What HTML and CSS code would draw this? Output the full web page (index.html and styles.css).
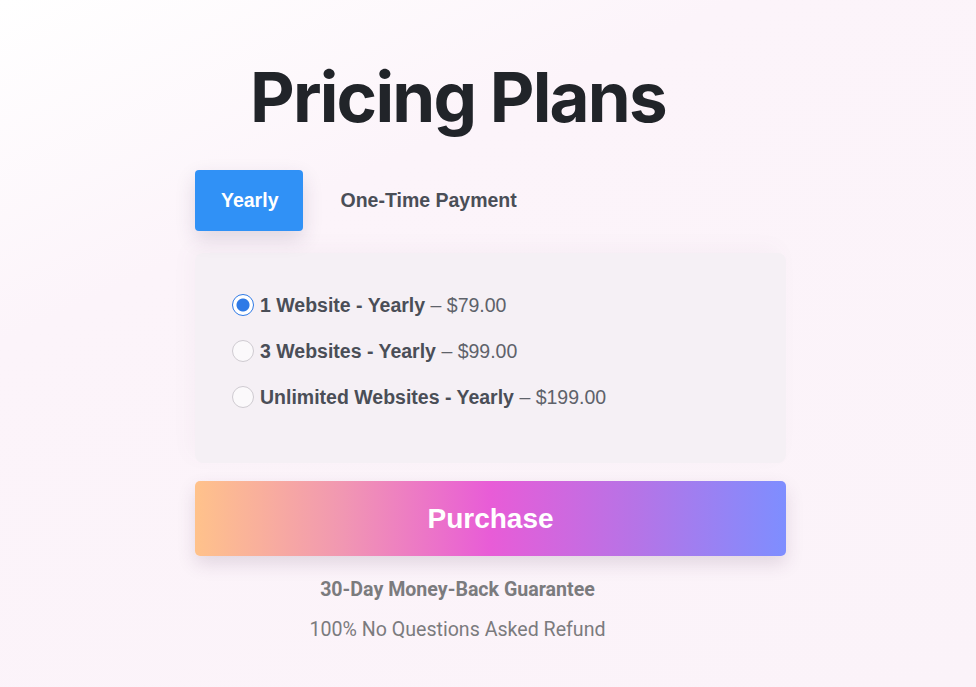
FILE: index.html
```html
<!DOCTYPE html>
<html lang="en">
<head>
    <meta charset="UTF-8">
    <meta name="viewport" content="width=device-width, initial-scale=1.0">
    <title>Pricing Plans</title>
    <link rel="stylesheet" href="styles.css">
</head>
<body>

    <div class="pricing">
        <h1 class="title">Pricing Plans</h1>

        <div class="tabs">
            <button class="tab active">Yearly</button>
            <button class="tab">One-Time Payment</button>
        </div>

        <div class="plans">
            <label class="plan">
                <input type="radio" name="plan" checked>
                <span><b>1 Website - Yearly</b> – $79.00</span>
            </label>
            <label class="plan">
                <input type="radio" name="plan">
                <span><b>3 Websites - Yearly</b> – $99.00</span>
            </label>
            <label class="plan">
                <input type="radio" name="plan">
                <span><b>Unlimited Websites - Yearly</b> – $199.00</span>
            </label>
        </div>

        <button class="btn-purchase">Purchase</button>

        <div class="guarantee">
            <p class="guarantee-title">30-Day Money-Back Guarantee</p>
            <p class="guarantee-text">100% No Questions Asked Refund</p>
        </div>
    </div>

</body>
</html>
```

FILE: styles.css
```css
html, body {
    height: 100%;
}

body {
    margin: 0;
    font-family: "Liberation Sans", Arial, sans-serif;
    background: linear-gradient(155deg, #ffffff 0%, #fcf4fa 30%, #fbf3f9 100%);
    color: #4a4e57;
}

.pricing {
    width: 591px;
    margin-left: 195px;
    padding-top: 52px;
}

.title {
    margin: 0 0 28px 55px;
    font-family: Inter, sans-serif;
    font-weight: 700;
    font-size: 69px;
    line-height: 90px;
    letter-spacing: -1.8px;
    color: #212429;
}

.tabs {
    display: flex;
    align-items: center;
    margin-bottom: 22px;
}

.tab {
    font-family: "Liberation Sans", Arial, sans-serif;
    font-weight: bold;
    font-size: 19.5px;
    height: 61px;
    padding: 0 38px 0 37px;
    border: none;
    border-radius: 4px;
    background: transparent;
    color: #4a4e57;
    cursor: pointer;
}

.tab.active {
    padding: 0 25px 0 26px;
    background: #3091f6;
    color: #fff;
    box-shadow: 0 8px 20px rgba(60, 40, 80, 0.15);
}

.plans {
    display: flex;
    flex-direction: column;
    gap: 24px;
    padding: 41px 37px 55px;
    background: #f5f0f5;
    border-radius: 8px;
    box-shadow: -6px -6px 20px rgba(120, 90, 120, 0.04);
}

.plan {
    display: flex;
    align-items: center;
    gap: 6px;
    font-size: 19.5px;
    line-height: 22px;
}

.plan span {
    color: #5e626a;
}

.plan b {
    font-weight: bold;
    color: #4a4e57;
}

.plan input {
    appearance: none;
    width: 22px;
    height: 22px;
    margin: 0;
    border: 1px solid #cfcbd1;
    border-radius: 50%;
    background: #fbf9fb;
    flex-shrink: 0;
}

.plan input:checked {
    border: 1px solid #2f7ae6;
    background: radial-gradient(circle, #2f7ae6 0 6px, #fff 7px);
}

.btn-purchase {
    display: block;
    width: 100%;
    height: 75px;
    margin-top: 18px;
    border: none;
    border-radius: 5px;
    background: linear-gradient(90deg, #ffc28b 0%, #f197b2 25%, #e85cd7 50%, #b574e7 75%, #7e8eff 100%);
    color: #fff;
    font-family: "Liberation Sans", Arial, sans-serif;
    font-weight: bold;
    font-size: 28px;
    box-shadow: 0 8px 18px rgba(80, 50, 90, 0.15);
    cursor: pointer;
}

.guarantee {
    width: 525px;
    padding-top: 22px;
    text-align: center;
    font-family: Roboto, sans-serif;
    font-size: 19.6px;
    color: #7b7b7e;
}

.guarantee p {
    margin: 0;
    line-height: 24px;
}

.guarantee-title {
    font-weight: bold;
    margin-bottom: 16px !important;
}
```
